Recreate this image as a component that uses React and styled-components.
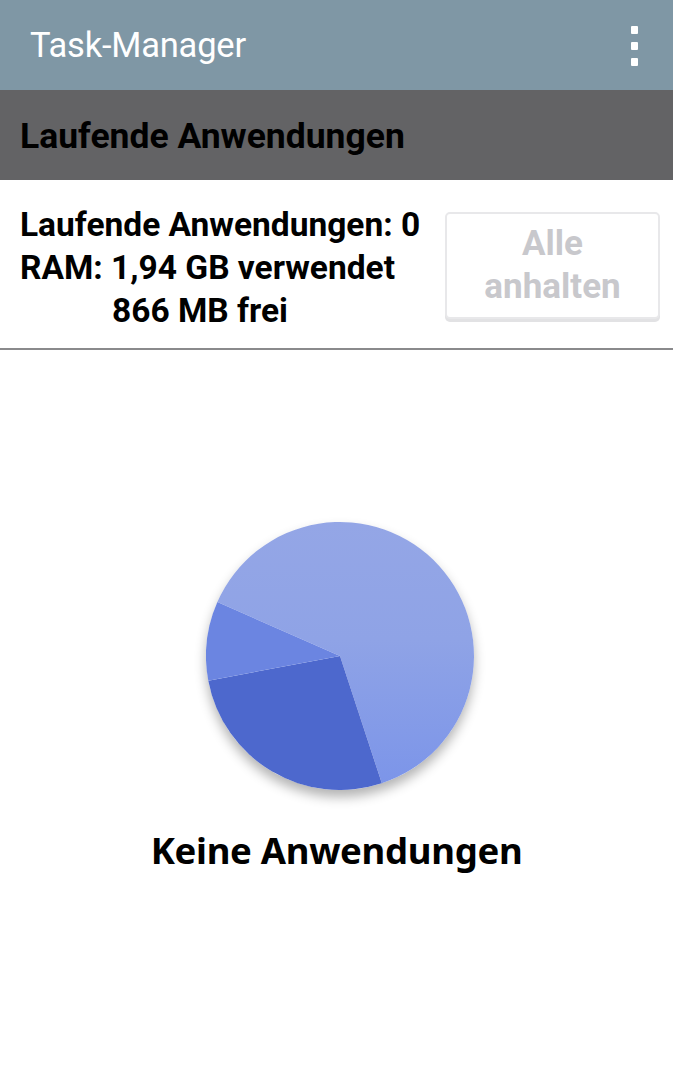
import React from 'react'
import styled, { createGlobalStyle } from 'styled-components'

const GlobalStyle = createGlobalStyle`
  html, body {
    margin: 0;
    padding: 0;
    background: #ffffff;
    font-family: Roboto, 'Liberation Sans', sans-serif;
  }
`

const Page = styled.div`
  width: 673px;
  height: 1080px;
  display: flex;
  flex-direction: column;
  background: #ffffff;
  overflow: hidden;
`

const TopBar = styled.header`
  height: 90px;
  background: #7f97a5;
  display: flex;
  align-items: center;
  justify-content: space-between;
  padding: 0 30px 0 30px;
  box-sizing: border-box;
`

const Title = styled.h1`
  margin: 0;
  font-family: Roboto, sans-serif;
  font-weight: 400;
  font-size: 34.5px;
  color: #ffffff;
  letter-spacing: -0.2px;
`

const MenuButton = styled.div`
  display: flex;
  flex-direction: column;
  gap: 8px;
  margin-right: 5px;
  margin-top: 2px;
`

const Dot = styled.span`
  width: 7px;
  height: 8px;
  border-radius: 1px;
  background: #ffffff;
`

const SectionHeader = styled.div`
  height: 90px;
  background: #636365;
  display: flex;
  align-items: center;
  padding: 0 20px;
  box-sizing: border-box;
`

const SectionTitle = styled.h2`
  margin: 0;
  font-family: Roboto, sans-serif;
  font-weight: 700;
  font-size: 35.5px;
  color: #000000;
  padding-top: 2px;
`

const InfoRow = styled.div`
  height: 170px;
  display: flex;
  align-items: center;
  justify-content: space-between;
  padding: 0 13px 0 20px;
  border-bottom: 2px solid #8a8a8c;
  box-sizing: border-box;
`

const InfoText = styled.div`
  font-family: Roboto, sans-serif;
  font-weight: 700;
  font-size: 33.5px;
  line-height: 43px;
  color: #000000;
  margin-top: 6px;
`

const Indent = styled.div`
  padding-left: 92px;
`

const StopButton = styled.button`
  width: 215px;
  height: 107px;
  background: #ffffff;
  border: 2px solid #e8e8ea;
  border-radius: 5px;
  box-shadow: 0 3px 0 #e2e2e4;
  font-family: Roboto, sans-serif;
  font-weight: 700;
  font-size: 35px;
  line-height: 43px;
  color: #c8c8cc;
  margin-top: 2px;
  padding: 0;
`

const Content = styled.main`
  flex: 1;
  display: flex;
  flex-direction: column;
  align-items: center;
  padding-top: 172px;
`

const PieWrap = styled.div`
  width: 268px;
  height: 268px;
  border-radius: 50%;
  box-shadow: 0 7px 12px rgba(0, 0, 0, 0.3);
  margin-left: 6px;
`

const EmptyLabel = styled.div`
  margin-top: 35px;
  font-family: 'Noto Sans', 'Open Sans', sans-serif;
  font-weight: 700;
  font-size: 36.5px;
  color: #000000;
  letter-spacing: -0.3px;
`

const R = 134
const C = 134

const point = (deg) => {
  const a = (deg * Math.PI) / 180
  return [C + R * Math.cos(a), C + R * Math.sin(a)]
}

const slice = (from, to) => {
  const [x1, y1] = point(from)
  const [x2, y2] = point(to)
  const large = to - from > 180 ? 1 : 0
  return `M${C} ${C} L${x1.toFixed(2)} ${y1.toFixed(2)} A${R} ${R} 0 ${large} 1 ${x2.toFixed(2)} ${y2.toFixed(2)} Z`
}

const Pie = () => (
  <svg width='268' height='268' viewBox='0 0 268 268'>
    <defs>
      <linearGradient id='light' x1='0' y1='0' x2='0' y2='1'>
        <stop offset='0%' stopColor='#94a6e6' />
        <stop offset='45%' stopColor='#8fa3e6' />
        <stop offset='100%' stopColor='#7c95e9' />
      </linearGradient>
    </defs>
    <path d={slice(203.75, 431.8)} fill='url(#light)' />
    <path d={slice(71.8, 169.4)} fill='#4d68cd' />
    <path d={slice(169.4, 203.75)} fill='#6b85e1' />
  </svg>
)

const App = () => {
  return (
    <Page>
      <GlobalStyle />
      <TopBar>
        <Title>Task-Manager</Title>
        <MenuButton>
          <Dot />
          <Dot />
          <Dot />
        </MenuButton>
      </TopBar>
      <SectionHeader>
        <SectionTitle>Laufende Anwendungen</SectionTitle>
      </SectionHeader>
      <InfoRow>
        <InfoText>
          <div>Laufende Anwendungen: 0</div>
          <div>RAM: 1,94 GB verwendet</div>
          <Indent>866 MB frei</Indent>
        </InfoText>
        <StopButton disabled>
          Alle
          <br />
          anhalten
        </StopButton>
      </InfoRow>
      <Content>
        <PieWrap>
          <Pie />
        </PieWrap>
        <EmptyLabel>Keine Anwendungen</EmptyLabel>
      </Content>
    </Page>
  )
}

export default App
